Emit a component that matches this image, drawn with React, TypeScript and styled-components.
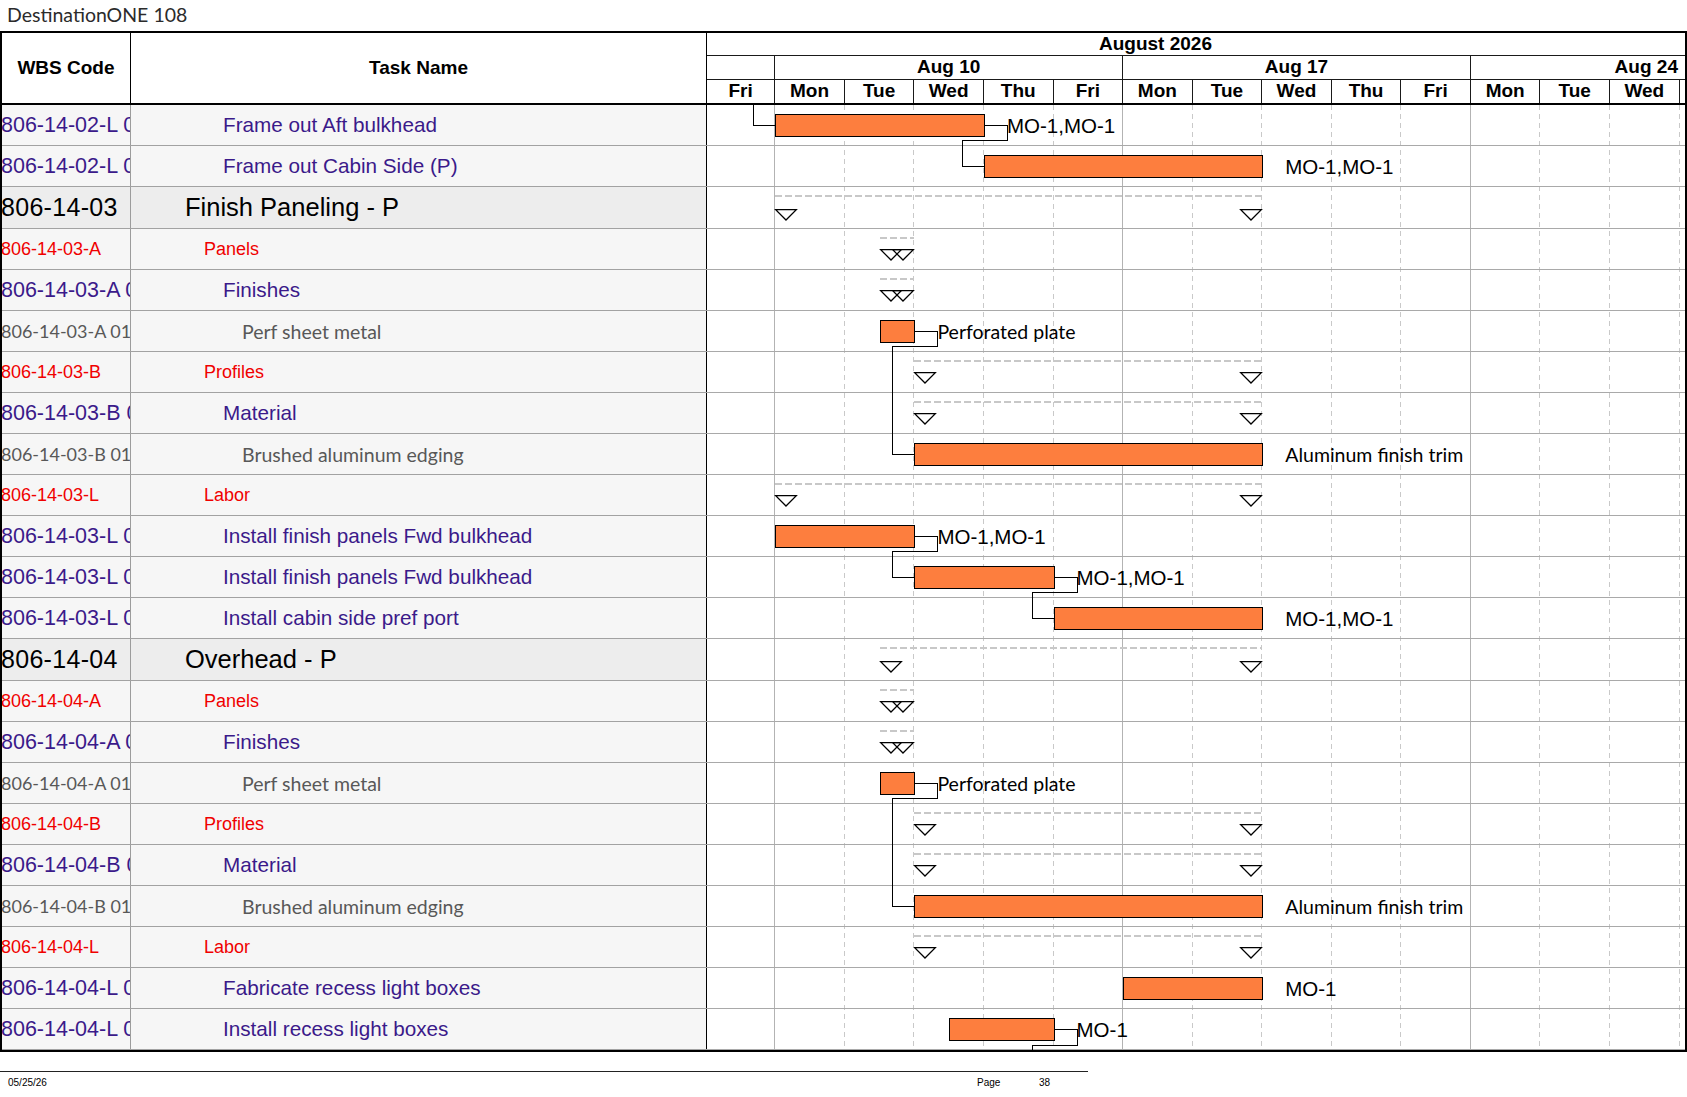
import React from "react";
import styled, { createGlobalStyle } from "styled-components";

// timescale: day 0 = Fri Aug 7 (weekends hidden)
const DAY = 69.57;
const ORIGIN = -1.3;
const gx = (d: number) => ORIGIN + d * DAY;
const GANTT_W = 978;
const ROW_H = 41;
const SECTION_H = 42;

type Kind = "section" | "group" | "task" | "item";

interface Row {
  wbs: string;
  name: string;
  kind: Kind;
  bar?: [number, number];
  summary?: [number, number];
  label?: string;
}

const rows: Row[] = [
  { wbs: "806-14-02-L 01", name: "Frame out Aft bulkhead", kind: "task", bar: [1, 4], label: "MO-1,MO-1" },
  { wbs: "806-14-02-L 02", name: "Frame out Cabin Side (P)", kind: "task", bar: [4, 8], label: "MO-1,MO-1" },
  { wbs: "806-14-03", name: "Finish Paneling - P", kind: "section", summary: [1, 8] },
  { wbs: "806-14-03-A", name: "Panels", kind: "group", summary: [2.5, 3] },
  { wbs: "806-14-03-A 01", name: "Finishes", kind: "task", summary: [2.5, 3] },
  { wbs: "806-14-03-A 01 01", name: "Perf sheet metal", kind: "item", bar: [2.5, 3], label: "Perforated plate" },
  { wbs: "806-14-03-B", name: "Profiles", kind: "group", summary: [3, 8] },
  { wbs: "806-14-03-B 01", name: "Material", kind: "task", summary: [3, 8] },
  { wbs: "806-14-03-B 01 01", name: "Brushed aluminum edging", kind: "item", bar: [3, 8], label: "Aluminum finish trim" },
  { wbs: "806-14-03-L", name: "Labor", kind: "group", summary: [1, 8] },
  { wbs: "806-14-03-L 01", name: "Install finish panels Fwd bulkhead", kind: "task", bar: [1, 3], label: "MO-1,MO-1" },
  { wbs: "806-14-03-L 02", name: "Install finish panels Fwd bulkhead", kind: "task", bar: [3, 5], label: "MO-1,MO-1" },
  { wbs: "806-14-03-L 03", name: "Install cabin side pref port", kind: "task", bar: [5, 8], label: "MO-1,MO-1" },
  { wbs: "806-14-04", name: "Overhead - P", kind: "section", summary: [2.5, 8] },
  { wbs: "806-14-04-A", name: "Panels", kind: "group", summary: [2.5, 3] },
  { wbs: "806-14-04-A 01", name: "Finishes", kind: "task", summary: [2.5, 3] },
  { wbs: "806-14-04-A 01 01", name: "Perf sheet metal", kind: "item", bar: [2.5, 3], label: "Perforated plate" },
  { wbs: "806-14-04-B", name: "Profiles", kind: "group", summary: [3, 8] },
  { wbs: "806-14-04-B 01", name: "Material", kind: "task", summary: [3, 8] },
  { wbs: "806-14-04-B 01 01", name: "Brushed aluminum edging", kind: "item", bar: [3, 8], label: "Aluminum finish trim" },
  { wbs: "806-14-04-L", name: "Labor", kind: "group", summary: [3, 8] },
  { wbs: "806-14-04-L 01", name: "Fabricate recess light boxes", kind: "task", bar: [6, 8], label: "MO-1" },
  { wbs: "806-14-04-L 02", name: "Install recess light boxes", kind: "task", bar: [3.5, 5], label: "MO-1" },
];

// finish-to-start links [from row, to row]
const links: [number, number][] = [
  [0, 1],
  [5, 8],
  [10, 11],
  [11, 12],
  [16, 19],
];

const days = ["Fri", "Mon", "Tue", "Wed", "Thu", "Fri", "Mon", "Tue", "Wed", "Thu", "Fri", "Mon", "Tue", "Wed", ""];
const dayWidth = (i: number) => (i === 0 ? DAY + ORIGIN : i === 14 ? GANTT_W - gx(14) : DAY);

const heights = rows.map((r) => (r.kind === "section" ? SECTION_H : ROW_H));
const tops = heights.map((_, i) => heights.slice(0, i).reduce((a, b) => a + b, 0));
const BODY_H = heights.reduce((a, b) => a + b, 0);

const kindFont: Record<Kind, string> = {
  section: `font-family: "Liberation Sans", Arial, sans-serif; font-size: 25.5px; color: #000;`,
  group: `font-family: "Liberation Sans", Arial, sans-serif; font-size: 18px; color: #f00000;`,
  task: `font-family: "Liberation Sans", Arial, sans-serif; font-size: 20.7px; color: #3b1a8a;`,
  item: `font-family: Lato, "Open Sans", sans-serif; font-size: 19.5px; color: #585858;`,
};
const wbsTweak: Record<Kind, string> = {
  section: `font-size: 25px; letter-spacing: 0.3px;`,
  group: ``,
  task: `font-size: 21.5px;`,
  item: `font-size: 18px;`,
};
const indent: Record<Kind, number> = { section: 54, group: 73, task: 92, item: 111 };

const GlobalStyle = createGlobalStyle`
  *, *::before, *::after { box-sizing: border-box; }
  html, body { margin: 0; padding: 0; background: #fff; }
  body { font-family: "Liberation Sans", Arial, sans-serif; }
`;

const Page = styled.div`
  width: 1687px;
`;

const Title = styled.div`
  height: 31px;
  line-height: 30px;
  padding-left: 7px;
  font-family: Lato, "Open Sans", sans-serif;
  font-size: 19.5px;
  color: #2b2b2b;
`;

const Table = styled.div`
  width: 1687px;
  border: 2px solid #000;
`;

const HeaderRow = styled.div`
  display: flex;
  height: 72px;
  border-bottom: 2px solid #000;
`;

const HeadCell = styled.div<{ $w: number }>`
  flex: 0 0 ${(p) => p.$w}px;
  border-right: 1px solid #000;
  display: flex;
  align-items: center;
  justify-content: center;
  font: bold 19px "Liberation Sans", Arial, sans-serif;
  color: #000;
`;

const TimeScale = styled.div`
  flex: 1;
  display: flex;
  flex-direction: column;
`;

const Tier = styled.div<{ $h: number; $last?: boolean }>`
  display: flex;
  height: ${(p) => p.$h}px;
  border-bottom: ${(p) => (p.$last ? "none" : "1px solid #1a1a1a")};
  font: bold 19px "Liberation Sans", Arial, sans-serif;
  color: #000;
`;

const MonthCell = styled.div`
  flex: 1;
  line-height: 21px;
  padding-left: 392px;
`;

const TierCell = styled.div<{ $align?: "center" | "right"; $border?: boolean }>`
  flex: 0 0 auto;
  border-right: ${(p) => (p.$border === false ? "none" : "1px solid #1a1a1a")};
  line-height: 22px;
  text-align: ${(p) => p.$align || "center"};
  padding-right: ${(p) => (p.$align === "right" ? "7px" : "0")};
  overflow: hidden;
  white-space: nowrap;
`;

const Body = styled.div`
  display: flex;
`;

const LeftCol = styled.div`
  flex: 0 0 705px;
`;

const TableRow = styled.div<{ $h: number; $section: boolean }>`
  display: flex;
  height: ${(p) => p.$h}px;
  border-bottom: 1px solid #a2a2a2;
  background: ${(p) => (p.$section ? "#ededed" : "#f6f6f6")};
`;

const WbsCell = styled.div<{ $kind: Kind }>`
  flex: 0 0 129px;
  border-right: 1px solid #9c9c9c;
  display: flex;
  align-items: center;
  overflow: hidden;
  white-space: nowrap;
  ${(p) => kindFont[p.$kind]}
  ${(p) => wbsTweak[p.$kind]}
`;

const WbsText = styled.span`
  margin-left: -1px;
`;

const NameCell = styled.div<{ $kind: Kind }>`
  flex: 0 0 576px;
  border-right: 1px solid #000;
  display: flex;
  align-items: center;
  padding-left: ${(p) => indent[p.$kind]}px;
  overflow: hidden;
  white-space: nowrap;
  ${(p) => kindFont[p.$kind]}
`;

const GanttBody = styled.div`
  flex: 0 0 ${GANTT_W}px;
  position: relative;
`;

const GridLayer = styled.div`
  position: absolute;
  inset: 0;
  display: flex;
`;

const DayCol = styled.div<{ $line: "solid" | "dashed" | "none" }>`
  flex: 0 0 auto;
  position: relative;
  &::after {
    content: "";
    position: absolute;
    top: 0;
    bottom: 0;
    right: 0;
    width: 1px;
    display: ${(p) => (p.$line === "none" ? "none" : "block")};
    background: ${(p) =>
      p.$line === "solid"
        ? "#b3b3b3"
        : "repeating-linear-gradient(to bottom, #c9c9c9 0 5px, transparent 5px 9px)"};
  }
`;

const GanttRow = styled.div<{ $h: number }>`
  position: relative;
  height: ${(p) => p.$h}px;
  border-bottom: 1px solid #a9a9a9;
`;

const Bar = styled.div`
  position: absolute;
  top: 9px;
  height: 23px;
  background: #fd7e3e;
  border: 1.5px solid #000;
`;

const BarLabel = styled.div<{ $arial: boolean }>`
  position: absolute;
  top: 0;
  line-height: 41px;
  white-space: nowrap;
  color: #000;
  font-family: ${(p) => (p.$arial ? `"Liberation Sans", Arial` : `Lato, "Open Sans"`)}, sans-serif;
  font-size: ${(p) => (p.$arial ? "20.5px" : "19.5px")};
`;

const SummaryLine = styled.div<{ $top: number }>`
  position: absolute;
  top: ${(p) => p.$top}px;
  height: 2px;
  background: repeating-linear-gradient(to right, #c8c8c8 0 7px, transparent 7px 10px);
`;

const Marker = styled.svg<{ $top: number }>`
  position: absolute;
  top: ${(p) => p.$top}px;
  overflow: visible;
`;

const LinkLayer = styled.svg`
  position: absolute;
  left: 0;
  top: 0;
  overflow: visible;
  pointer-events: none;
`;

const Footer = styled.div`
  width: 1088px;
  margin-top: 19px;
  border-top: 1px solid #222;
  display: grid;
  grid-template-columns: 969px 62px auto;
  padding: 5px 0 0 8px;
  font-family: "Liberation Sans Narrow", "Liberation Sans", Arial, sans-serif;
  font-size: 10px;
  line-height: 12px;
  color: #000;
`;

function Triangle({ left, top }: { left: number; top: number }) {
  return (
    <Marker $top={top} style={{ left }} width="22" height="12" viewBox="0 0 22 12">
      <polygon points="0.7,0.7 21.3,0.7 11,11" fill="none" stroke="#000" strokeWidth="1.3" />
    </Marker>
  );
}

function GanttLine({ row, index }: { row: Row; index: number }) {
  const section = row.kind === "section";
  return (
    <GanttRow $h={heights[index]}>
      {row.summary && (
        <>
          <SummaryLine
            $top={section ? 8 : 7.5}
            style={{ left: gx(row.summary[0]), width: gx(row.summary[1]) - gx(row.summary[0]) }}
          />
          <Triangle left={gx(row.summary[0])} top={section ? 21.5 : 20} />
          <Triangle left={gx(row.summary[1]) - 22} top={section ? 21.5 : 20} />
        </>
      )}
      {row.bar && (
        <Bar style={{ left: gx(row.bar[0]), width: gx(row.bar[1]) - gx(row.bar[0]) + 1 }} />
      )}
      {row.bar && row.label && (
        <BarLabel $arial={row.label.startsWith("MO")} style={{ left: gx(row.bar[1]) + 23 }}>
          {row.label}
        </BarLabel>
      )}
    </GanttRow>
  );
}

function linkPath(from: number, to: number) {
  const a = rows[from].bar!;
  const b = rows[to].bar!;
  const x1 = Math.round(gx(a[1])) + 0.5;
  const x2 = Math.round(gx(b[0]));
  const y1 = tops[from] + 20.5;
  const y2 = tops[to] + 20.5;
  const yMid = tops[from] + heights[from] - 5.5;
  return `M${x1} ${y1} H${x1 + 23} V${yMid} H${x2 - 21.5} V${y2} H${x2}`;
}

export default function App() {
  const first = rows[0].bar!;
  const last = rows.length - 1;
  const lastBar = rows[last].bar!;
  const xIn = Math.round(gx(first[0])) - 21.5;
  const xOut = Math.round(gx(lastBar[1])) + 0.5;
  const xOutBack = Math.round(gx(lastBar[1])) - 21.5;

  return (
    <Page>
      <GlobalStyle />
      <Title>DestinationONE 108</Title>
      <Table>
        <HeaderRow>
          <HeadCell $w={129}>WBS Code</HeadCell>
          <HeadCell $w={576}>Task Name</HeadCell>
          <TimeScale>
            <Tier $h={23}>
              <MonthCell>August 2026</MonthCell>
            </Tier>
            <Tier $h={24}>
              <TierCell style={{ width: dayWidth(0) }} />
              <TierCell style={{ width: DAY * 5 }}>Aug 10</TierCell>
              <TierCell style={{ width: DAY * 5 }}>Aug 17</TierCell>
              <TierCell $align="right" $border={false} style={{ width: GANTT_W - gx(11) }}>
                Aug 24
              </TierCell>
            </Tier>
            <Tier $h={23} $last>
              {days.map((d, i) => (
                <TierCell key={i} $border={i !== 14} style={{ width: dayWidth(i) }}>
                  {d}
                </TierCell>
              ))}
            </Tier>
          </TimeScale>
        </HeaderRow>
        <Body>
          <LeftCol>
            {rows.map((r, i) => (
              <TableRow key={i} $h={heights[i]} $section={r.kind === "section"}>
                <WbsCell $kind={r.kind}>
                  <WbsText>{r.wbs}</WbsText>
                </WbsCell>
                <NameCell $kind={r.kind}>{r.name}</NameCell>
              </TableRow>
            ))}
          </LeftCol>
          <GanttBody>
            <GridLayer>
              {days.map((_, i) => (
                <DayCol
                  key={i}
                  style={{ width: dayWidth(i) }}
                  $line={i === 14 ? "none" : i === 0 || i === 5 || i === 10 ? "solid" : "dashed"}
                />
              ))}
            </GridLayer>
            {rows.map((r, i) => (
              <GanttLine key={i} row={r} index={i} />
            ))}
            <LinkLayer width={GANTT_W} height={BODY_H} viewBox={`0 0 ${GANTT_W} ${BODY_H}`}>
              <g fill="none" stroke="#000" strokeWidth="1.2" shapeRendering="crispEdges">
                <path d={`M${xIn} 0 V${tops[0] + 20.5} H${Math.round(gx(first[0]))}`} />
                {links.map(([f, t]) => (
                  <path key={`${f}-${t}`} d={linkPath(f, t)} />
                ))}
                <path
                  d={`M${xOut} ${tops[last] + 20.5} H${xOut + 23} V${BODY_H - 4.5} H${xOutBack} V${BODY_H}`}
                />
              </g>
            </LinkLayer>
          </GanttBody>
        </Body>
      </Table>
      <Footer>
        <span>05/25/26</span>
        <span>Page</span>
        <span>38</span>
      </Footer>
    </Page>
  );
}
